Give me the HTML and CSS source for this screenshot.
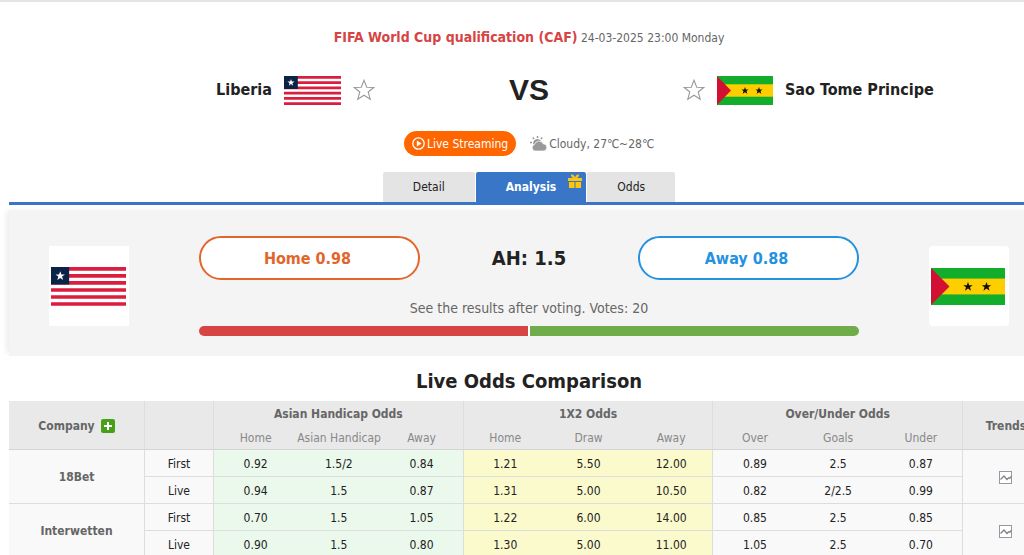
FILE: index.html
```html
<!DOCTYPE html>
<html lang="en">
<head>
    <meta charset="UTF-8">
    <title>Liberia VS Sao Tome Principe</title>
    <link rel="stylesheet" href="styles.css">
</head>
<body>
    <!-- shared shapes -->
    <svg class="defs" width="0" height="0">
        <symbol id="flag-lbr" viewBox="0 0 57 30" preserveAspectRatio="none">
            <rect width="57" height="30" fill="#fff"/>
            <path d="M0 1.4h57M0 6.8h57M0 12.2h57M0 17.7h57M0 23.1h57M0 28.5h57" stroke="#dc1e3e" stroke-width="2.8"/>
            <rect width="13.8" height="13.4" fill="#0a2346"/>
            <path d="M7 3.2l.9 2.6h2.7L8.400 7.400l.8 2.600L7 8.400 4.800 10l.8-2.600L3.400 5.800h2.700z" fill="#fff"/>
        </symbol>
        <symbol id="flag-stp" viewBox="0 0 56 28" preserveAspectRatio="none">
            <rect width="56" height="28" fill="#12ad2b"/>
            <rect y="8" width="56" height="12" fill="#ffce00"/>
            <path d="M0 0l14 14L0 28z" fill="#d21034"/>
            <path d="M28 10.500l.9 2.500h2.700l-2.100 1.600.8 2.600L28 15.600l-2.300 1.600.8-2.600-2.100-1.600h2.700z" fill="#111"/>
            <path d="M42 10.500l.9 2.500h2.700l-2.100 1.600.8 2.600L42 15.600l-2.300 1.600.8-2.600-2.100-1.600h2.700z" fill="#111"/>
        </symbol>
        <symbol id="star" viewBox="0 0 22 22">
            <path d="M11 1.300l2.700 7 7 .2-5.500 4.500 2 7.200-6.200-4-6.200 4 2-7.200L1.300 8.500l7-.2z" fill="#fff" stroke="#999" stroke-width="1.100"/>
        </symbol>
        <symbol id="trend" viewBox="0 0 14 14">
            <rect x=".5" y=".5" width="12" height="12" fill="#fff" stroke="#929ba5"/>
            <path d="M1.500 8.500L5 5l3 3.500 2-2 .8.800L12.500 5" fill="none" stroke="#808080" stroke-width="1.200"/>
        </symbol>
    </svg>

    <div class="page">
        <div class="match-head">
            <div class="league">
                <a href="#" class="league-name">FIFA World Cup qualification (CAF)</a>
                <span class="match-time">24-03-2025 23:00 Monday</span>
            </div>

            <div class="teams">
                <div class="team home">
                    <a href="#">Liberia</a>
                    <svg class="flag flag-home"><use href="#flag-lbr"/></svg>
                    <button class="fav" aria-label="Follow Liberia"><svg><use href="#star"/></svg></button>
                </div>
                <div class="vs">VS</div>
                <div class="team away">
                    <button class="fav" aria-label="Follow Sao Tome Principe"><svg><use href="#star"/></svg></button>
                    <svg class="flag flag-away"><use href="#flag-stp"/></svg>
                    <a href="#">Sao Tome Principe</a>
                </div>
            </div>

            <div class="info">
                <a href="#" class="live-btn">
                    <svg width="13" height="13" viewBox="0 0 13 13">
                        <circle cx="6.500" cy="6.500" r="5.700" fill="none" stroke="#fff" stroke-width="1.300"/>
                        <path d="M4.800 3.600v5.800l4.800-2.900z" fill="#fff"/>
                    </svg>
                    Live Streaming
                </a>
                <span class="weather">
                    <svg width="17" height="16" viewBox="0 0 17 16">
                        <path d="M7.500 0v2M2.800 1.600l1.300 1.400M12.200 1.600l-1.300 1.400M0 6.500h2" stroke="#999" stroke-width="1.500"/>
                        <path d="M3.300 8.500A4.200 4.200 0 0 1 11.400 6L6 9z" fill="#999"/>
                        <path d="M4.800 15a3.400 3.400 0 0 1-.2-6.600 4.600 4.600 0 0 1 8.600-.6 3.600 3.600 0 0 1 0 7.200z" fill="#999" stroke="#fff" stroke-width=".7"/>
                    </svg>
                    Cloudy, 27℃~28℃
                </span>
            </div>

            <nav class="tabs">
                <a href="#" class="tab">Detail</a>
                <a href="#" class="tab active">Analysis
                    <svg class="gift" width="14" height="14" viewBox="0 0 14 14">
                        <path d="M0 4h14v3H0zM1 8h5.500v6H1zM7.500 8H13v6H7.500z" fill="#fdc50c"/>
                        <path d="M7 4.500C5 4.500 3 3 2.800.5 5.500 0 7 2 7 4.500c0-2.500 1.500-4.500 4.200-4C11 3 9 4.500 7 4.500z" fill="#fdc50c"/>
                    </svg>
                </a>
                <a href="#" class="tab">Odds</a>
            </nav>
        </div>

        <div class="vote">
            <svg class="vote-flag vote-flag-home" viewBox="0 0 80 80">
                <use href="#flag-lbr" x="2" y="21" width="75" height="39"/>
            </svg>
            <div class="vote-main">
                <div class="vote-row">
                    <button class="vote-btn vote-home">Home 0.98</button>
                    <strong class="ah">AH: 1.5</strong>
                    <button class="vote-btn vote-away">Away 0.88</button>
                </div>
                <div class="vote-note">See the results after voting. Votes: 20</div>
                <div class="vote-bar">
                    <span class="bar-home"></span>
                    <span class="bar-away"></span>
                </div>
            </div>
            <svg class="vote-flag" viewBox="0 0 80 80">
                <use href="#flag-stp" x="2" y="22" width="74" height="37"/>
            </svg>
        </div>

        <h2>Live Odds Comparison</h2>

        <table class="odds">
            <colgroup>
                <col class="col-company">
                <col class="col-type">
                <col span="9">
                <col class="col-trends">
            </colgroup>
            <thead>
                <tr class="groups">
                    <th rowspan="2" class="line">
                        <span class="company">Company
                            <button class="add" aria-label="Add company">
                                <svg width="14" height="14" viewBox="0 0 14 14"><path d="M7 3v8M3 7h8" stroke="#fff" stroke-width="2"/></svg>
                            </button>
                        </span>
                    </th>
                    <th rowspan="2" class="line"></th>
                    <th colspan="3" class="line">Asian Handicap Odds</th>
                    <th colspan="3" class="line">1X2 Odds</th>
                    <th colspan="3" class="line">Over/Under Odds</th>
                    <th rowspan="2">Trends</th>
                </tr>
                <tr class="subs">
                    <th>Home</th>
                    <th>Asian Handicap</th>
                    <th class="line">Away</th>
                    <th>Home</th>
                    <th>Draw</th>
                    <th class="line">Away</th>
                    <th>Over</th>
                    <th>Goals</th>
                    <th class="line">Under</th>
                </tr>
            </thead>
            <tbody>
                <tr>
                    <th rowspan="2" class="line">18Bet</th>
                    <td class="line">First</td>
                    <td class="ah-odds">0.92</td>
                    <td class="ah-odds">1.5/2</td>
                    <td class="ah-odds line">0.84</td>
                    <td class="x-odds">1.21</td>
                    <td class="x-odds">5.50</td>
                    <td class="x-odds line">12.00</td>
                    <td>0.89</td>
                    <td>2.5</td>
                    <td class="line">0.87</td>
                    <td rowspan="2"><a href="#" class="trend" aria-label="18Bet trends"><svg><use href="#trend"/></svg></a></td>
                </tr>
                <tr>
                    <td class="line">Live</td>
                    <td class="ah-odds">0.94</td>
                    <td class="ah-odds">1.5</td>
                    <td class="ah-odds line">0.87</td>
                    <td class="x-odds">1.31</td>
                    <td class="x-odds">5.00</td>
                    <td class="x-odds line">10.50</td>
                    <td>0.82</td>
                    <td>2/2.5</td>
                    <td class="line">0.99</td>
                </tr>
                <tr>
                    <th rowspan="2" class="line">Interwetten</th>
                    <td class="line">First</td>
                    <td class="ah-odds">0.70</td>
                    <td class="ah-odds">1.5</td>
                    <td class="ah-odds line">1.05</td>
                    <td class="x-odds">1.22</td>
                    <td class="x-odds">6.00</td>
                    <td class="x-odds line">14.00</td>
                    <td>0.85</td>
                    <td>2.5</td>
                    <td class="line">0.85</td>
                    <td rowspan="2"><a href="#" class="trend" aria-label="Interwetten trends"><svg><use href="#trend"/></svg></a></td>
                </tr>
                <tr>
                    <td class="line">Live</td>
                    <td class="ah-odds">0.90</td>
                    <td class="ah-odds">1.5</td>
                    <td class="ah-odds line">0.80</td>
                    <td class="x-odds">1.30</td>
                    <td class="x-odds">5.00</td>
                    <td class="x-odds line">11.00</td>
                    <td>1.05</td>
                    <td>2.5</td>
                    <td class="line">0.70</td>
                </tr>
            </tbody>
        </table>
    </div>
</body>
</html>
```
FILE: styles.css
```css
* {
    box-sizing: border-box;
}
body {
    margin: 0;
    border-top: 2px solid #e4e4e4;
    font-family: Tahoma, "DejaVu Sans Condensed", "Noto Sans", "Noto Sans CJK SC", sans-serif;
    font-size: 12px;
    line-height: 16px;
    color: #222;
    background: #fff;
    overflow: hidden;
}
a {
    color: inherit;
    text-decoration: none;
}
button {
    font-family: inherit;
    padding: 0;
    border: 0;
    background: none;
    cursor: pointer;
}
svg {
    display: block;
    flex: none;
}
.defs {
    position: absolute;
}
/* content is a bit wider than the window */
.page {
    margin: 0 -25px 0 9px;
}

/* match header */
.match-head {
    padding-top: 25px;
    border-bottom: 3px solid #3a76c8;
}
.league {
    text-align: center;
    line-height: 20px;
}
.league-name {
    font-size: 14px;
    font-weight: bold;
    color: #d64444;
}
.match-time {
    color: #666;
}
.teams {
    display: grid;
    grid-template-columns: 1fr 308px 1fr;
    align-items: center;
    height: 44px;
    margin-top: 20px;
}
.team {
    display: flex;
    align-items: center;
    gap: 12px;
    font-size: 16px;
    font-weight: bold;
}
.home {
    justify-content: flex-end;
}
.flag {
    width: 57px;
    height: 29px;
}
.flag-away {
    width: 56px;
}
.fav svg {
    width: 22px;
    height: 22px;
}
.vs {
    text-align: center;
    font: bold 30px/36px "Liberation Sans", Arial, sans-serif;
}
.info {
    display: flex;
    justify-content: center;
    align-items: center;
    gap: 14px;
    margin-top: 19px;
}
.live-btn {
    display: flex;
    align-items: center;
    gap: 2px;
    height: 25px;
    padding: 0 8px;
    border-radius: 13px;
    background: #ff6600;
    color: #fff;
}
.weather {
    display: flex;
    align-items: center;
    gap: 2px;
    color: #666;
}
.tabs {
    display: flex;
    justify-content: center;
    gap: 1px;
    margin-top: 16px;
}
.tab {
    position: relative;
    padding: 0 30px;
    line-height: 30px;
    border-radius: 2px 2px 0 0;
    background: #e4e4e4;
}
.tab.active {
    background: #3a76c8;
    color: #fff;
    font-weight: bold;
}
.gift {
    position: absolute;
    top: 2px;
    right: 4px;
}

/* voting */
.vote {
    display: flex;
    align-items: center;
    gap: 70px;
    margin-top: 5px;
    padding: 26px 40px 20px;
    background: #f4f4f4;
    box-shadow: -5px -1px 5px -2px #eee;
}
.vote-flag {
    width: 80px;
    height: 80px;
    border-radius: 4px;
    background: #fff;
}
.vote-flag-home {
    border-radius: 0;
}
.vote-main {
    flex: 1;
}
.vote-row {
    display: flex;
    align-items: center;
    justify-content: space-between;
}
.vote-btn {
    width: 221px;
    height: 44px;
    padding-right: 4px;
    border: 2px solid;
    border-radius: 22px;
    background: #fff;
    font-size: 16px;
    font-weight: bold;
}
.vote-home {
    color: #e2662c;
}
.vote-away {
    color: #2492de;
}
.ah {
    font-size: 20px;
}
.vote-note {
    margin-top: 18px;
    line-height: 20px;
    font-size: 14px;
    text-align: center;
    color: #666;
}
.vote-bar {
    display: flex;
    gap: 2px;
    height: 10px;
    margin-top: 8px;
    border-radius: 5px;
    overflow: hidden;
    background: #fff;
}
.vote-bar span {
    flex: 1;
}
.bar-home {
    background: #d64444;
}
.bar-away {
    background: #70ac49;
}

/* odds table */
h2 {
    margin: 12px 0 7px;
    font-size: 20px;
    line-height: 26px;
    text-align: center;
}
.odds {
    width: 100%;
    table-layout: fixed;
    border-collapse: separate;
    border-spacing: 0;
}
.col-company {
    width: 136px;
}
.col-type {
    width: 69px;
}
.col-trends {
    width: 86px;
}
.odds th,
.odds td {
    height: 27px;
    padding: 1px 0 0;
    text-align: center;
    background: #f9f9f9;
    border-bottom: 1px solid #ddd;
}
.odds th {
    color: #666;
}
.odds .line {
    border-right: 1px solid #ddd;
}
.odds thead th {
    background: #e9e9e9;
    border-bottom-color: #d4d4d4;
}
.odds .groups th {
    height: 24px;
}
.odds .groups th[colspan] {
    border-bottom: 0;
}
.odds .subs th {
    height: 25px;
    font-weight: normal;
    color: #888;
    white-space: nowrap;
}
.odds .ah-odds {
    background: #ebf8ec;
}
.odds .x-odds {
    background: #fbfacd;
}
.company {
    display: flex;
    justify-content: center;
    align-items: center;
    gap: 6px;
}
.add {
    border-radius: 2px;
    background: #48a016;
}
.trend {
    display: inline-block;
    vertical-align: middle;
}
.trend svg {
    width: 14px;
    height: 14px;
}
```
